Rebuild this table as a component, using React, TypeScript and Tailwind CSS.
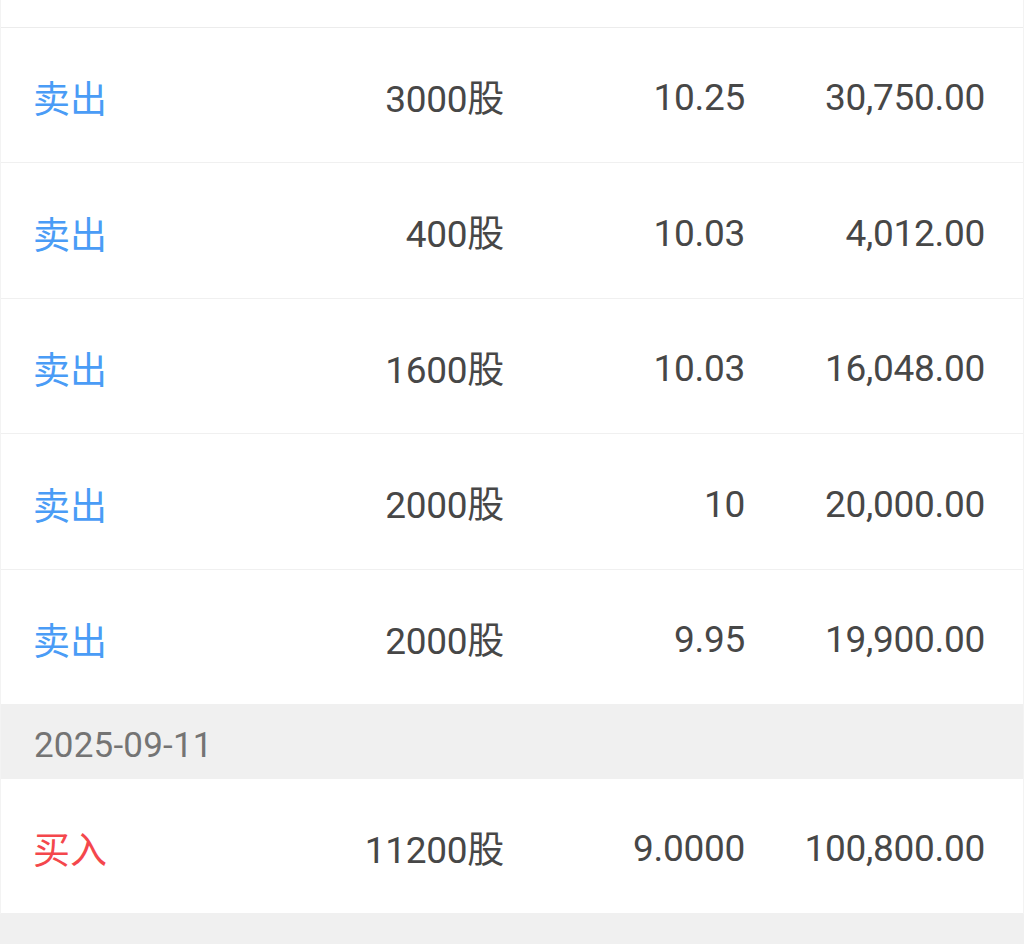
import React from "react";

type Trade = {
  side: "卖出" | "买入";
  qty: string;
  price: string;
  amount: string;
};

const day1: Trade[] = [
  { side: "卖出", qty: "3000股", price: "10.25", amount: "30,750.00" },
  { side: "卖出", qty: "400股", price: "10.03", amount: "4,012.00" },
  { side: "卖出", qty: "1600股", price: "10.03", amount: "16,048.00" },
  { side: "卖出", qty: "2000股", price: "10", amount: "20,000.00" },
  { side: "卖出", qty: "2000股", price: "9.95", amount: "19,900.00" },
];

const day2: Trade[] = [
  { side: "买入", qty: "11200股", price: "9.0000", amount: "100,800.00" },
];

const font = {
  fontFamily: '"DIN Alternate", Roboto, "Noto Sans CJK SC", sans-serif',
};

const cjk = { fontFamily: '"Noto Sans CJK SC", sans-serif', fontSize: 37 };

function Row({ t }: { t: Trade }) {
  return (
    <div className="grid h-[135.4px] grid-cols-[231px_240px_241px_240px] items-center border-b border-[#f0f0f0] bg-white pl-[32px] pt-[6px] text-[37px] text-[#474747]">
      <span
        className={t.side === "买入" ? "text-[#f4474c]" : "text-[#4a9cf6]"}
        style={cjk}
      >
        {t.side}
      </span>
      <span className="text-right tracking-[-0.3px]">
        {t.qty.replace("股", "")}
        <span style={cjk}>股</span>
      </span>
      <span className="text-right tracking-[-0.3px]">{t.price}</span>
      <span className="text-right tracking-[-0.3px]">{t.amount}</span>
    </div>
  );
}

export default function App() {
  return (
    <div className="h-[944px] w-[1024px] overflow-hidden bg-[#f0f0f0]" style={font}>
      <div className="border-x border-[#f3f3f3]">
        <div className="h-[28px] border-b border-[#ececec] bg-white" />
        {day1.map((t, i) => (
          <Row key={i} t={t} />
        ))}
        <div className="flex h-[74px] items-center bg-[#f0f0f0] pl-[33px] pt-[8px] text-[35px] tracking-[0.2px] text-[#747474]">
          2025-09-11
        </div>
        {day2.map((t, i) => (
          <Row key={i} t={t} />
        ))}
      </div>
    </div>
  );
}
